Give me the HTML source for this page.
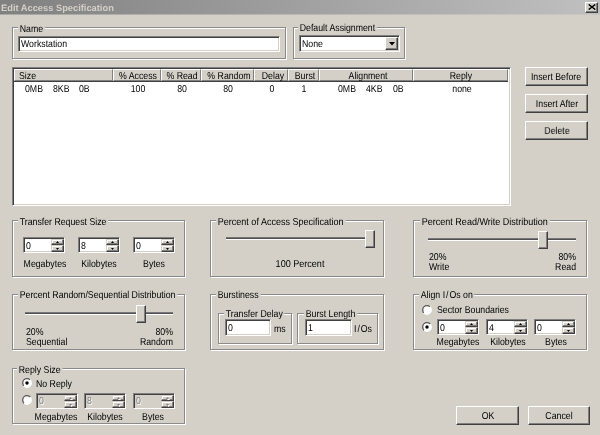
<!DOCTYPE html>
<html><head><meta charset="utf-8"><title>Edit Access Specification</title><style>
html,body{margin:0;padding:0}
body{width:600px;height:435px;overflow:hidden;background:#D4D0C8;position:relative;font-family:"Liberation Sans",sans-serif;font-size:10px;color:#000}
#w{position:absolute;left:0;top:0;width:600px;height:435px;will-change:transform}
.a{position:absolute}
.t{position:absolute;white-space:nowrap;line-height:11px;height:11px;transform:scale(0.875,1.0);transform-origin:0 0;text-rendering:geometricPrecision}
.c{text-align:center;transform-origin:50% 0}
.r{text-align:right;transform-origin:100% 0}
.ls{margin:0 1px 0 1.2px}
.lbl{background:#D4D0C8;padding:0 2px}
.title{font-weight:bold;color:#D4D0C8;font-size:9.3px;transform:none}
.etch{position:absolute;border:1px solid #8a8a8a;box-shadow:inset 1px 1px 0 #fff,1px 1px 0 #fff}
.sunk{position:absolute;border:1px solid;border-color:#808080 #fff #fff #808080;box-shadow:inset 1px 1px 0 #404040,inset -1px -1px 0 #D4D0C8}
.btn{position:absolute;background:#D4D0C8;border:1px solid;border-color:#fff #404040 #404040 #fff;box-shadow:inset -1px -1px 0 #808080,inset 1px 1px 0 #D4D0C8}
.spb{position:absolute;background:#D4D0C8;border:1px solid;border-color:#D4D0C8 #404040 #404040 #D4D0C8;box-shadow:inset -1px -1px 0 #808080,inset 1px 1px 0 #fff}
.list{position:absolute;background:#fff;border:1px solid;border-color:#808080 #fff #fff #808080;box-shadow:inset 1px 1px 0 #404040,inset -1px -1px 0 #D4D0C8}
.hdr{position:absolute;background:#D4D0C8;border:1px solid;border-color:#fff #808080 #808080 #fff}
</style></head>
<body><div id="w">
<div class="a" style="left:0;top:0;width:600px;height:14px;background:linear-gradient(to right,#808080,#c0c0c0)"></div>
<div class="a" style="left:0;top:14px;width:600px;height:1px;background:linear-gradient(to right,#aaa8a4,#cac8c4)"></div>
<div class="t title" style="left:1px;top:2.6px">Edit Access Specification</div>
<div class="btn" style="left:585px;top:2px;width:11px;height:9px"></div>
<svg class="a" style="left:588px;top:4px" width="8" height="6"><path d="M0.7 0.5 L7.3 5.5 M7.3 0.5 L0.7 5.5" stroke="#000" stroke-width="1.5"/></svg>
<div class="etch" style="left:12px;top:27px;width:272px;height:30px"></div>
<div class="t lbl" style="left:17.80px;top:23.50px;">Name</div>
<div class="sunk" style="left:18px;top:36px;width:260px;height:14px;background:#fff"></div>
<div class="t " style="left:21.00px;top:39.00px;">Workstation</div>
<div class="etch" style="left:293px;top:27px;width:110px;height:30px"></div>
<div class="t lbl" style="left:298.20px;top:23.00px;">Default Assignment</div>
<div class="sunk" style="left:299px;top:35px;width:99px;height:15px;background:#fff"></div>
<div class="t " style="left:302.00px;top:39.00px;">None</div>
<div class="btn" style="left:385px;top:37px;width:11px;height:11px"></div>
<svg class="a" style="left:388.5px;top:42px" width="6" height="4"><path d="M0 0 L6 0 L3 3.5Z" fill="#000"/></svg>
<div class="list" style="left:12px;top:67px;width:497px;height:137px"></div>
<div class="hdr" style="left:14px;top:69px;width:97px;height:10px"></div>
<div class="t " style="left:19.00px;top:71.20px;">Size</div>
<div class="hdr" style="left:113px;top:69px;width:46px;height:10px"></div>
<div class="t c " style="left:57.70px;width:160px;top:71.20px;">% Access</div>
<div class="hdr" style="left:161px;top:69px;width:38px;height:10px"></div>
<div class="t c " style="left:102.00px;width:160px;top:71.20px;">% Read</div>
<div class="hdr" style="left:201px;top:69px;width:51px;height:10px"></div>
<div class="t c " style="left:148.80px;width:160px;top:71.20px;">% Random</div>
<div class="hdr" style="left:254px;top:69px;width:32px;height:10px"></div>
<div class="t c " style="left:192.60px;width:160px;top:71.20px;">Delay</div>
<div class="hdr" style="left:288px;top:69px;width:29px;height:10px"></div>
<div class="t c " style="left:225.00px;width:160px;top:71.20px;">Burst</div>
<div class="hdr" style="left:319px;top:69px;width:92px;height:10px"></div>
<div class="t c " style="left:287.50px;width:160px;top:71.20px;">Alignment</div>
<div class="hdr" style="left:413px;top:69px;width:93px;height:10px"></div>
<div class="t c " style="left:381.30px;width:160px;top:71.20px;">Reply</div>
<div class="a" style="left:14px;top:81px;width:494px;height:1px;background:#404040"></div>
<div class="t " style="left:24.80px;top:84.00px;">0MB</div>
<div class="t " style="left:52.80px;top:84.00px;">8KB</div>
<div class="t " style="left:79.00px;top:84.00px;">0B</div>
<div class="t c " style="left:57.70px;width:160px;top:84.00px;">100</div>
<div class="t c " style="left:101.70px;width:160px;top:84.00px;">80</div>
<div class="t c " style="left:148.00px;width:160px;top:84.00px;">80</div>
<div class="t c " style="left:192.00px;width:160px;top:84.00px;">0</div>
<div class="t c " style="left:224.00px;width:160px;top:84.00px;">1</div>
<div class="t " style="left:338.30px;top:84.00px;">0MB</div>
<div class="t " style="left:366.00px;top:84.00px;">4KB</div>
<div class="t " style="left:392.70px;top:84.00px;">0B</div>
<div class="t c " style="left:381.70px;width:160px;top:84.00px;">none</div>
<div class="btn" style="left:525px;top:67px;width:61px;height:17px"></div>
<div class="t c " style="left:476.00px;width:160px;top:72.00px;">Insert Before</div>
<div class="btn" style="left:525px;top:94px;width:61px;height:17px"></div>
<div class="t c " style="left:476.50px;width:160px;top:99.00px;">Insert After</div>
<div class="btn" style="left:525px;top:121px;width:61px;height:17px"></div>
<div class="t c " style="left:476.50px;width:160px;top:126.00px;">Delete</div>
<div class="etch" style="left:12px;top:220px;width:171px;height:55px"></div>
<div class="t lbl" style="left:18.00px;top:216.50px;">Transfer Request Size</div>
<div class="sunk" style="left:23px;top:237px;width:40px;height:14px;background:#fff"></div>
<div class="t " style="left:26.00px;top:240.60px;color:#000">0</div>
<div class="spb" style="left:51px;top:239px;width:11px;height:4px"></div>
<div class="spb" style="left:51px;top:245px;width:11px;height:5px"></div>
<svg class="a" style="left:56.0px;top:241px" width="3" height="2"><path d="M1.5 0 L3 2 L0 2Z" fill="#000"/></svg>
<svg class="a" style="left:56.0px;top:248px" width="3" height="2"><path d="M0 0 L3 0 L1.5 2Z" fill="#000"/></svg>
<div class="t c " style="left:-35.50px;width:160px;top:259.20px;">Megabytes</div>
<div class="sunk" style="left:78px;top:237px;width:40px;height:14px;background:#fff"></div>
<div class="t " style="left:81.00px;top:240.60px;color:#000">8</div>
<div class="spb" style="left:106px;top:239px;width:11px;height:4px"></div>
<div class="spb" style="left:106px;top:245px;width:11px;height:5px"></div>
<svg class="a" style="left:111.0px;top:241px" width="3" height="2"><path d="M1.5 0 L3 2 L0 2Z" fill="#000"/></svg>
<svg class="a" style="left:111.0px;top:248px" width="3" height="2"><path d="M0 0 L3 0 L1.5 2Z" fill="#000"/></svg>
<div class="t c " style="left:18.90px;width:160px;top:259.20px;">Kilobytes</div>
<div class="sunk" style="left:133px;top:237px;width:40px;height:14px;background:#fff"></div>
<div class="t " style="left:136.00px;top:240.60px;color:#000">0</div>
<div class="spb" style="left:161px;top:239px;width:11px;height:4px"></div>
<div class="spb" style="left:161px;top:245px;width:11px;height:5px"></div>
<svg class="a" style="left:166.0px;top:241px" width="3" height="2"><path d="M1.5 0 L3 2 L0 2Z" fill="#000"/></svg>
<svg class="a" style="left:166.0px;top:248px" width="3" height="2"><path d="M0 0 L3 0 L1.5 2Z" fill="#000"/></svg>
<div class="t c " style="left:73.50px;width:160px;top:259.20px;">Bytes</div>
<div class="etch" style="left:210px;top:220px;width:172px;height:55px"></div>
<div class="t lbl" style="left:216.40px;top:216.60px;transform:scale(0.9012,1.0);">Percent of Access Specification</div>
<div class="a" style="left:226px;top:237px;width:146px;height:1px;background:#777"></div>
<div class="a" style="left:226px;top:238px;width:146px;height:1px;background:#505050"></div>
<div class="a" style="left:226px;top:239px;width:146px;height:1px;background:#fff"></div>
<div class="btn" style="left:365px;top:230px;width:8px;height:16px"></div>
<div class="t c " style="left:220.00px;width:160px;top:259.40px;transform:scale(0.905,1)">100 Percent</div>
<div class="etch" style="left:413px;top:220px;width:172px;height:55px"></div>
<div class="t lbl" style="left:419.50px;top:216.60px;transform:scale(0.9012,1.0);">Percent Read/Write Distribution</div>
<div class="a" style="left:428px;top:238px;width:148px;height:1px;background:#777"></div>
<div class="a" style="left:428px;top:239px;width:148px;height:1px;background:#505050"></div>
<div class="a" style="left:428px;top:240px;width:148px;height:1px;background:#fff"></div>
<div class="btn" style="left:538px;top:231px;width:8px;height:16px"></div>
<div class="t " style="left:428.50px;top:252.20px;">20%</div>
<div class="t " style="left:428.50px;top:262.40px;">Write</div>
<div class="t r " style="left:415.50px;width:160px;top:252.20px;">80%</div>
<div class="t r " style="left:415.50px;width:160px;top:262.40px;">Read</div>
<div class="etch" style="left:12px;top:294px;width:171px;height:54px"></div>
<div class="t lbl" style="left:18.00px;top:290.40px;">Percent Random/Sequential Distribution</div>
<div class="a" style="left:25px;top:312px;width:148px;height:1px;background:#777"></div>
<div class="a" style="left:25px;top:313px;width:148px;height:1px;background:#505050"></div>
<div class="a" style="left:25px;top:314px;width:148px;height:1px;background:#fff"></div>
<div class="btn" style="left:136px;top:305px;width:8px;height:16px"></div>
<div class="t " style="left:26.00px;top:326.80px;">20%</div>
<div class="t " style="left:26.00px;top:337.30px;">Sequential</div>
<div class="t r " style="left:12.60px;width:160px;top:326.80px;">80%</div>
<div class="t r " style="left:12.60px;width:160px;top:337.30px;">Random</div>
<div class="etch" style="left:210px;top:294px;width:172px;height:54px"></div>
<div class="t lbl" style="left:216.40px;top:290.40px;">Burstiness</div>
<div class="etch" style="left:218px;top:313px;width:72px;height:29px"></div>
<div class="t lbl" style="left:224.30px;top:309.30px;">Transfer Delay</div>
<div class="sunk" style="left:225px;top:319px;width:44px;height:15px;background:#fff"></div>
<div class="t " style="left:228.00px;top:323.00px;">0</div>
<div class="t " style="left:274.40px;top:324.40px;">ms</div>
<div class="etch" style="left:297px;top:313px;width:79px;height:29px"></div>
<div class="t lbl" style="left:303.60px;top:309.30px;">Burst Length</div>
<div class="sunk" style="left:305px;top:319px;width:45px;height:15px;background:#fff"></div>
<div class="t " style="left:308.00px;top:323.00px;">1</div>
<div class="t " style="left:354.30px;top:324.40px;">I<span class="ls">/</span>Os</div>
<div class="etch" style="left:413px;top:294px;width:172px;height:54px"></div>
<div class="t lbl" style="left:419.10px;top:290.40px;">Align I<span class="ls">/</span>Os on</div>
<svg class="a" style="left:421.40px;top:303.60px" width="12" height="12"><defs><linearGradient id="rg1" x1="0" y1="0" x2="1" y2="1"><stop offset="0.5" stop-color="#555555"/><stop offset="0.5" stop-color="#ffffff"/></linearGradient></defs><circle cx="6" cy="6" r="4.3" fill="#fff" stroke="url(#rg1)" stroke-width="1.3"/></svg>
<div class="t " style="left:436.80px;top:305.00px;">Sector Boundaries</div>
<svg class="a" style="left:421.40px;top:320.50px" width="12" height="12"><defs><linearGradient id="rg2" x1="0" y1="0" x2="1" y2="1"><stop offset="0.5" stop-color="#555555"/><stop offset="0.5" stop-color="#ffffff"/></linearGradient></defs><circle cx="6" cy="6" r="4.3" fill="#fff" stroke="url(#rg2)" stroke-width="1.3"/><circle cx="6" cy="6" r="1.7" fill="#000"/></svg>
<div class="sunk" style="left:437px;top:319px;width:40px;height:14px;background:#fff"></div>
<div class="t " style="left:440.00px;top:322.60px;color:#000">0</div>
<div class="spb" style="left:465px;top:321px;width:11px;height:4px"></div>
<div class="spb" style="left:465px;top:327px;width:11px;height:5px"></div>
<svg class="a" style="left:470.0px;top:323px" width="3" height="2"><path d="M1.5 0 L3 2 L0 2Z" fill="#000"/></svg>
<svg class="a" style="left:470.0px;top:330px" width="3" height="2"><path d="M0 0 L3 0 L1.5 2Z" fill="#000"/></svg>
<div class="t c " style="left:377.50px;width:160px;top:337.30px;">Megabytes</div>
<div class="sunk" style="left:486px;top:319px;width:40px;height:14px;background:#fff"></div>
<div class="t " style="left:489.00px;top:322.60px;color:#000">4</div>
<div class="spb" style="left:514px;top:321px;width:11px;height:4px"></div>
<div class="spb" style="left:514px;top:327px;width:11px;height:5px"></div>
<svg class="a" style="left:519.0px;top:323px" width="3" height="2"><path d="M1.5 0 L3 2 L0 2Z" fill="#000"/></svg>
<svg class="a" style="left:519.0px;top:330px" width="3" height="2"><path d="M0 0 L3 0 L1.5 2Z" fill="#000"/></svg>
<div class="t c " style="left:427.50px;width:160px;top:337.30px;">Kilobytes</div>
<div class="sunk" style="left:534px;top:319px;width:40px;height:14px;background:#fff"></div>
<div class="t " style="left:537.00px;top:322.60px;color:#000">0</div>
<div class="spb" style="left:562px;top:321px;width:11px;height:4px"></div>
<div class="spb" style="left:562px;top:327px;width:11px;height:5px"></div>
<svg class="a" style="left:567.0px;top:323px" width="3" height="2"><path d="M1.5 0 L3 2 L0 2Z" fill="#000"/></svg>
<svg class="a" style="left:567.0px;top:330px" width="3" height="2"><path d="M0 0 L3 0 L1.5 2Z" fill="#000"/></svg>
<div class="t c " style="left:476.25px;width:160px;top:337.30px;">Bytes</div>
<div class="etch" style="left:12px;top:368px;width:171px;height:54px"></div>
<div class="t lbl" style="left:17.30px;top:364.50px;">Reply Size</div>
<svg class="a" style="left:20.70px;top:376.80px" width="12" height="12"><defs><linearGradient id="rg3" x1="0" y1="0" x2="1" y2="1"><stop offset="0.5" stop-color="#555555"/><stop offset="0.5" stop-color="#ffffff"/></linearGradient></defs><circle cx="6" cy="6" r="4.3" fill="#fff" stroke="url(#rg3)" stroke-width="1.3"/><circle cx="6" cy="6" r="1.7" fill="#000"/></svg>
<div class="t " style="left:35.80px;top:379.20px;">No Reply</div>
<svg class="a" style="left:20.70px;top:394.20px" width="12" height="12"><defs><linearGradient id="rg4" x1="0" y1="0" x2="1" y2="1"><stop offset="0.5" stop-color="#555555"/><stop offset="0.5" stop-color="#ffffff"/></linearGradient></defs><circle cx="6" cy="6" r="4.3" fill="#fff" stroke="url(#rg4)" stroke-width="1.3"/></svg>
<div class="sunk" style="left:36px;top:393px;width:40px;height:14px;background:#D4D0C8"></div>
<div class="t " style="left:39.00px;top:395.80px;color:#808080;text-shadow:0.8px 0.8px 0 #fff">0</div>
<div class="spb" style="left:64px;top:395px;width:11px;height:4px"></div>
<div class="spb" style="left:64px;top:401px;width:11px;height:5px"></div>
<svg class="a" style="left:70.0px;top:398px" width="3" height="2"><path d="M1.5 0 L3 2 L0 2Z" fill="#fff"/></svg>
<svg class="a" style="left:70.0px;top:405px" width="3" height="2"><path d="M0 0 L3 0 L1.5 2Z" fill="#fff"/></svg>
<svg class="a" style="left:69.0px;top:397px" width="3" height="2"><path d="M1.5 0 L3 2 L0 2Z" fill="#808080"/></svg>
<svg class="a" style="left:69.0px;top:404px" width="3" height="2"><path d="M0 0 L3 0 L1.5 2Z" fill="#808080"/></svg>
<div class="t c " style="left:-23.75px;width:160px;top:412.00px;">Megabytes</div>
<div class="sunk" style="left:84px;top:393px;width:40px;height:14px;background:#D4D0C8"></div>
<div class="t " style="left:87.00px;top:395.80px;color:#808080;text-shadow:0.8px 0.8px 0 #fff">8</div>
<div class="spb" style="left:112px;top:395px;width:11px;height:4px"></div>
<div class="spb" style="left:112px;top:401px;width:11px;height:5px"></div>
<svg class="a" style="left:118.0px;top:398px" width="3" height="2"><path d="M1.5 0 L3 2 L0 2Z" fill="#fff"/></svg>
<svg class="a" style="left:118.0px;top:405px" width="3" height="2"><path d="M0 0 L3 0 L1.5 2Z" fill="#fff"/></svg>
<svg class="a" style="left:117.0px;top:397px" width="3" height="2"><path d="M1.5 0 L3 2 L0 2Z" fill="#808080"/></svg>
<svg class="a" style="left:117.0px;top:404px" width="3" height="2"><path d="M0 0 L3 0 L1.5 2Z" fill="#808080"/></svg>
<div class="t c " style="left:24.75px;width:160px;top:412.00px;">Kilobytes</div>
<div class="sunk" style="left:133px;top:393px;width:40px;height:14px;background:#D4D0C8"></div>
<div class="t " style="left:136.00px;top:395.80px;color:#808080;text-shadow:0.8px 0.8px 0 #fff">0</div>
<div class="spb" style="left:161px;top:395px;width:11px;height:4px"></div>
<div class="spb" style="left:161px;top:401px;width:11px;height:5px"></div>
<svg class="a" style="left:167.0px;top:398px" width="3" height="2"><path d="M1.5 0 L3 2 L0 2Z" fill="#fff"/></svg>
<svg class="a" style="left:167.0px;top:405px" width="3" height="2"><path d="M0 0 L3 0 L1.5 2Z" fill="#fff"/></svg>
<svg class="a" style="left:166.0px;top:397px" width="3" height="2"><path d="M1.5 0 L3 2 L0 2Z" fill="#808080"/></svg>
<svg class="a" style="left:166.0px;top:404px" width="3" height="2"><path d="M0 0 L3 0 L1.5 2Z" fill="#808080"/></svg>
<div class="t c " style="left:73.10px;width:160px;top:412.00px;">Bytes</div>
<div class="btn" style="left:456px;top:406px;width:61px;height:17px"></div>
<div class="t c " style="left:407.50px;width:160px;top:411.00px;">OK</div>
<div class="btn" style="left:528px;top:406px;width:60px;height:17px"></div>
<div class="t c " style="left:479.00px;width:160px;top:411.00px;">Cancel</div>
</div></body></html>
